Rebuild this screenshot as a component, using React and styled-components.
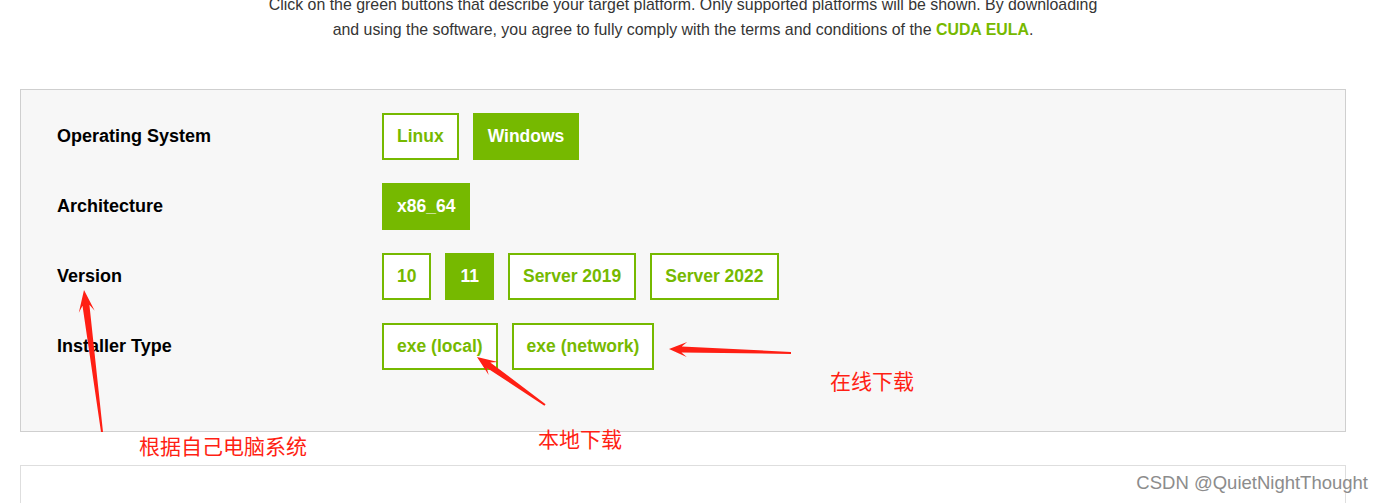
import React from "react";
import styled, { createGlobalStyle } from "styled-components";

const GREEN = "#76b900";
const RED = "#ff1f14";

const Global = createGlobalStyle`
  html, body { margin: 0; padding: 0; background: #fff; }
  body { font-family: "Liberation Sans", Arial, sans-serif; overflow: hidden; }
`;

const Page = styled.div`
  position: relative;
  width: 1384px;
  height: 503px;
  overflow: hidden;
`;

const Content = styled.div`
  width: 1326px;
  margin: -8px 0 0 20px;
`;

const Intro = styled.p`
  margin: 0;
  text-align: center;
  font-size: 15.9px;
  line-height: 25px;
  color: #353535;
`;

const Link = styled.a`
  color: ${GREEN};
  font-weight: bold;
  text-decoration: none;
`;

const Panel = styled.div`
  margin-top: 47px;
  box-sizing: border-box;
  border: 1px solid #cfcfcf;
  background: #f7f7f7;
  padding: 23px 36px 61px;
  display: flex;
  flex-direction: column;
  gap: 23px;
`;

const Row = styled.div`
  display: grid;
  grid-template-columns: 325px 1fr;
  align-items: center;
`;

const Label = styled.div`
  font-weight: bold;
  font-size: 18px;
  color: #000;
`;

const Options = styled.div`
  display: flex;
  gap: 14px;
`;

const Option = styled.button`
  box-sizing: border-box;
  height: 47px;
  padding: 0 13px;
  border: 2px solid ${GREEN};
  background: ${(p) => (p.$active ? GREEN : "#fff")};
  color: ${(p) => (p.$active ? "#fff" : GREEN)};
  font-family: "Liberation Sans", Arial, sans-serif;
  font-weight: bold;
  font-size: 17.5px;
  cursor: pointer;
`;

const NextPanel = styled.div`
  margin-top: 33px;
  height: 100px;
  border: 1px solid #dedede;
  background: #fff;
`;

const Overlay = styled.svg`
  position: absolute;
  left: 0;
  top: 0;
  pointer-events: none;
`;

const Note = styled.span`
  position: absolute;
  left: ${(p) => p.$x}px;
  top: ${(p) => p.$y}px;
  font-family: "Noto Sans CJK SC", sans-serif;
  font-size: 21px;
  line-height: 24px;
  color: ${RED};
  white-space: nowrap;
`;

const Watermark = styled.span`
  position: absolute;
  right: 16px;
  top: 471px;
  font-family: "Liberation Sans", Arial, sans-serif;
  font-size: 18.5px;
  line-height: 24px;
  color: #8c8c8c;
  text-shadow: 0 0 2px #fff;
  white-space: nowrap;
`;

function arrowPoints(tail, tip, headLen, headHalf, neckHalf, tailHalf) {
  const dx = tip[0] - tail[0];
  const dy = tip[1] - tail[1];
  const len = Math.hypot(dx, dy);
  const ux = dx / len, uy = dy / len;
  const nx = -uy, ny = ux;
  const base = [tip[0] - ux * headLen, tip[1] - uy * headLen];
  const neck = [tip[0] - ux * (headLen * 0.7), tip[1] - uy * (headLen * 0.7)];
  const pts = [
    [tail[0] + nx * tailHalf, tail[1] + ny * tailHalf],
    [neck[0] + nx * neckHalf, neck[1] + ny * neckHalf],
    [base[0] + nx * headHalf, base[1] + ny * headHalf],
    tip,
    [base[0] - nx * headHalf, base[1] - ny * headHalf],
    [neck[0] - nx * neckHalf, neck[1] - ny * neckHalf],
    [tail[0] - nx * tailHalf, tail[1] - ny * tailHalf],
  ];
  return pts.map((p) => p.map((v) => v.toFixed(1)).join(",")).join(" ");
}

const rows = [
  { label: "Operating System", options: [{ t: "Linux" }, { t: "Windows", a: true }] },
  { label: "Architecture", options: [{ t: "x86_64", a: true }] },
  {
    label: "Version",
    options: [{ t: "10" }, { t: "11", a: true }, { t: "Server 2019" }, { t: "Server 2022" }],
  },
  { label: "Installer Type", options: [{ t: "exe (local)" }, { t: "exe (network)" }] },
];

const arrows = [
  { tail: [102, 432], tip: [84, 290], head: 22, hh: 8, nh: 3.5, th: 1 },
  { tail: [545, 405], tip: [477, 357], head: 20, hh: 8, nh: 3.2, th: 1 },
  { tail: [791, 353], tip: [669, 349], head: 18, hh: 7.5, nh: 3, th: 1 },
];

export default function App() {
  return (
    <>
      <Global />
      <Page>
        <Content>
          <Intro>
            Click on the green buttons that describe your target platform. Only supported platforms will be shown. By downloading
            <br />
            and using the software, you agree to fully comply with the terms and conditions of the <Link href="#">CUDA EULA</Link>.
          </Intro>
          <Panel>
            {rows.map((r) => (
              <Row key={r.label}>
                <Label>{r.label}</Label>
                <Options>
                  {r.options.map((o) => (
                    <Option key={o.t} $active={o.a}>
                      {o.t}
                    </Option>
                  ))}
                </Options>
              </Row>
            ))}
          </Panel>
          <NextPanel />
        </Content>
        <Overlay width="1384" height="503" viewBox="0 0 1384 503">
          {arrows.map((a, i) => (
            <polygon key={i} points={arrowPoints(a.tail, a.tip, a.head, a.hh, a.nh, a.th)} fill={RED} />
          ))}
        </Overlay>
        <Note $x={139} $y={433}>根据自己电脑系统</Note>
        <Note $x={538} $y={426}>本地下载</Note>
        <Note $x={830} $y={368}>在线下载</Note>
        <Watermark>CSDN @QuietNightThought</Watermark>
      </Page>
    </>
  );
}
